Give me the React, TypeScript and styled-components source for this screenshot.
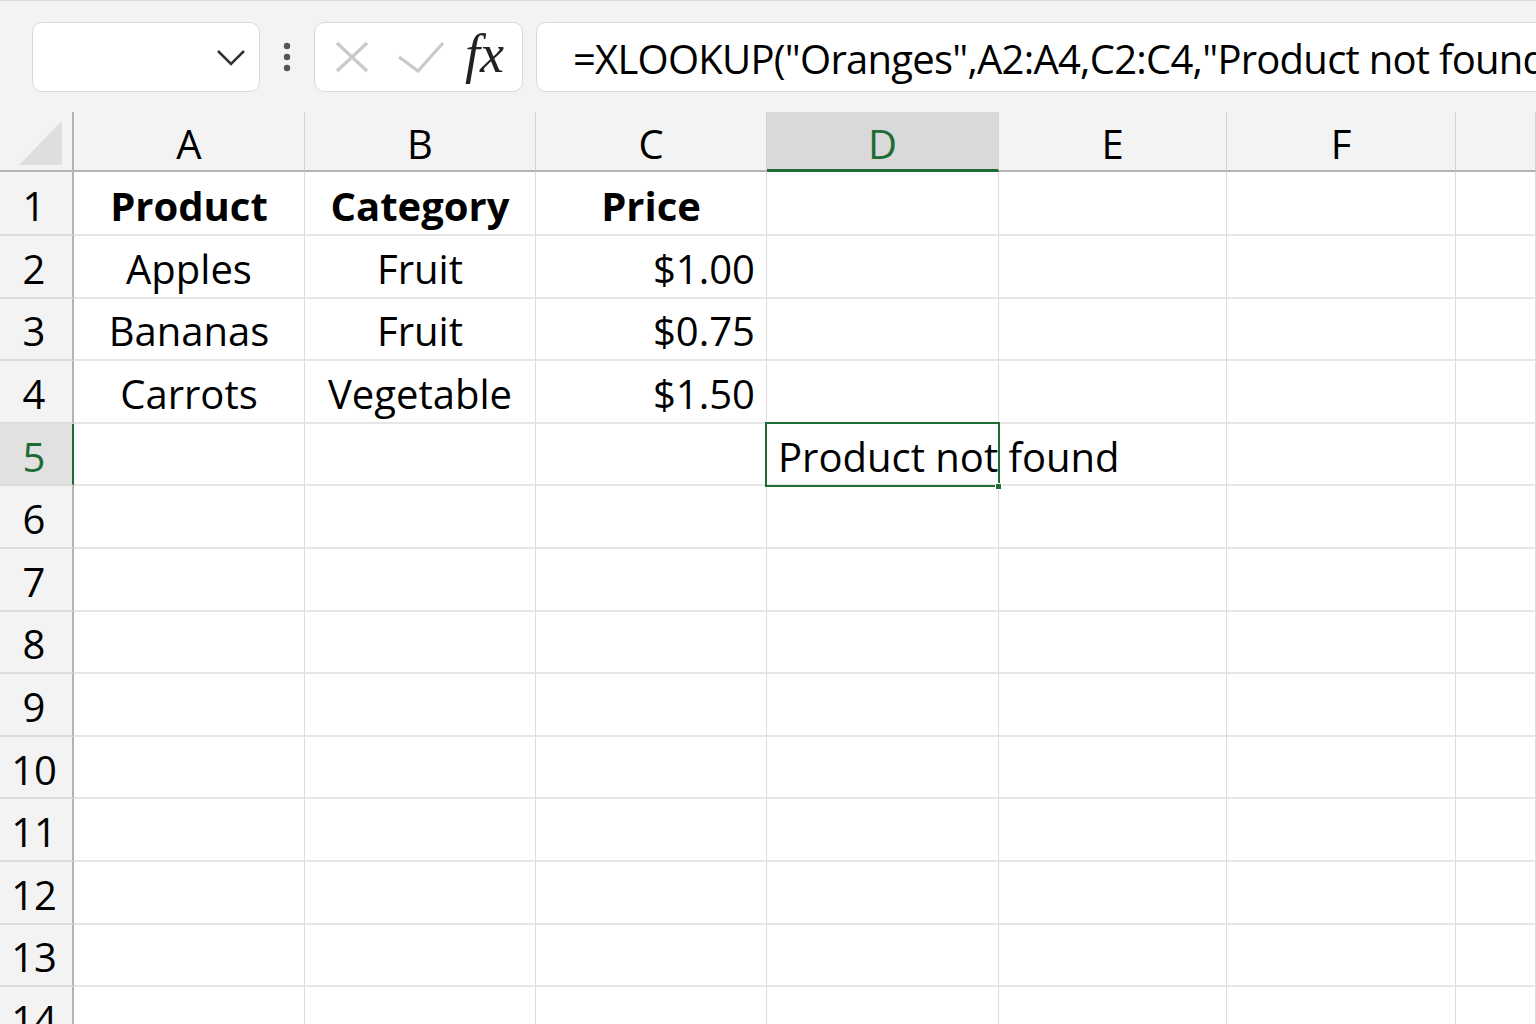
import React from "react";
import styled, { createGlobalStyle } from "styled-components";

const GREEN = "#1d6b35";

const GlobalStyle = createGlobalStyle`
  html, body { margin: 0; padding: 0; }
  body {
    background: #f3f3f3;
    overflow: hidden;
    font-family: "Open Sans", "Noto Sans", "Liberation Sans", sans-serif;
    color: #000;
  }
`;

const Page = styled.div`
  width: 1536px;
  height: 1024px;
  overflow: hidden;
  display: flex;
  flex-direction: column;
  background: #f3f3f3;
`;

const Toolbar = styled.div`
  height: 112px;
  box-sizing: border-box;
  border-top: 1px solid #dddddd;
  padding: 21px 0 0 32px;
  display: flex;
  align-items: flex-start;
  flex-shrink: 0;
`;

const Box = styled.div`
  height: 70px;
  box-sizing: border-box;
  background: #ffffff;
  border: 1.5px solid #d9d9d9;
  border-radius: 10px;
  display: flex;
  align-items: center;
`;

const NameBox = styled(Box)`
  width: 228px;
  justify-content: flex-end;
  padding-right: 13px;
`;

const DotsSlot = styled.div`
  width: 54px;
  height: 70px;
  display: flex;
  align-items: center;
  justify-content: center;
`;

const FxGroup = styled(Box)`
  width: 209px;
  padding-left: 20px;
`;

const ButtonIcon = styled.svg<{ $mr: number }>`
  display: block;
  margin-right: ${(p) => p.$mr}px;
  flex-shrink: 0;
`;

const FxLabel = styled.span`
  font-family: "Liberation Serif", "DejaVu Serif", serif;
  font-style: italic;
  font-size: 54px;
  line-height: 1;
  color: #222;
  margin-top: -6px;
`;

const FormulaBox = styled(Box)`
  flex: 1;
  margin-left: 13px;
  margin-right: -30px;
  padding-left: 36px;
  overflow: hidden;
  border-radius: 10px 0 0 10px;
`;

const FormulaText = styled.span`
  font-size: 40px;
  letter-spacing: -0.75px;
  white-space: nowrap;
  color: #000;
  padding-top: 3px;
`;

const Sheet = styled.div`
  flex: 1;
  display: grid;
  grid-template-columns: 74px 231px 231px 231px 232px 228px 229px 1fr;
  grid-template-rows: 60px 64px repeat(13, 62.6px);
  background: linear-gradient(#f3f3f3, #f3f3f3) top / 100% 60px no-repeat, #ffffff;
  overflow: hidden;
`;

const Corner = styled.div`
  background: #f3f3f3;
  border-bottom: 2px solid #b4b4b4;
  border-right: 2px solid #b4b4b4;
  box-sizing: border-box;
  display: flex;
  align-items: flex-end;
  justify-content: flex-end;
  padding: 0 10px 5px 0;
`;

const ColHead = styled.div<{ $active?: boolean }>`
  box-sizing: border-box;
  background: ${(p) => (p.$active ? "#d9d9d9" : "#f3f3f3")};
  border-right: 1px solid #d2d2d2;
  border-bottom: ${(p) => (p.$active ? `3px solid ${GREEN}` : "2px solid #b4b4b4")};
  color: ${(p) => (p.$active ? GREEN : "#000")};
  font-size: 40px;
  display: flex;
  align-items: center;
  justify-content: center;
  padding-top: ${(p) => (p.$active ? "6px" : "4px")};
`;

const RowHead = styled.div<{ $active?: boolean }>`
  box-sizing: border-box;
  background: ${(p) => (p.$active ? "#e1e1e1" : "#f3f3f3")};
  border-bottom: 2px solid #dcdcdc;
  border-right: 2px solid ${(p) => (p.$active ? GREEN : "#b4b4b4")};
  color: ${(p) => (p.$active ? GREEN : "#000")};
  font-size: 40px;
  display: flex;
  align-items: center;
  justify-content: center;
  padding: 4px 4px 0 0;
`;

const Cell = styled.div<{
  $align?: "left" | "center" | "right";
  $bold?: boolean;
  $selected?: boolean;
}>`
  box-sizing: border-box;
  position: ${(p) => (p.$selected ? "relative" : "static")};
  border-right: 1px solid #dcdcdc;
  border-bottom: 2px solid #e6e6e6;
  font-size: 40px;
  font-weight: ${(p) => (p.$bold ? 700 : 400)};
  white-space: nowrap;
  overflow: visible;
  display: flex;
  align-items: center;
  justify-content: ${(p) =>
    p.$align === "center" ? "center" : p.$align === "right" ? "flex-end" : "flex-start"};
  padding: 4px 11px 0 11px;
  min-width: 0;
  z-index: ${(p) => (p.$selected ? 2 : "auto")};

  ${(p) =>
    p.$selected &&
    `
    &::after {
      content: "";
      position: absolute;
      top: -2px;
      left: -2px;
      right: -2px;
      bottom: -3px;
      border: 2px solid ${GREEN};
      pointer-events: none;
    }
  `}
`;

const FillHandle = styled.span`
  position: absolute;
  right: -4px;
  bottom: -6px;
  width: 5px;
  height: 5px;
  background: ${GREEN};
  border: 1px solid #fff;
  z-index: 3;
`;

type CellData = { text: string; align?: "left" | "center" | "right"; bold?: boolean };

const data: Record<number, CellData[]> = {
  1: [
    { text: "Product", align: "center", bold: true },
    { text: "Category", align: "center", bold: true },
    { text: "Price", align: "center", bold: true },
  ],
  2: [
    { text: "Apples", align: "center" },
    { text: "Fruit", align: "center" },
    { text: "$1.00", align: "right" },
  ],
  3: [
    { text: "Bananas", align: "center" },
    { text: "Fruit", align: "center" },
    { text: "$0.75", align: "right" },
  ],
  4: [
    { text: "Carrots", align: "center" },
    { text: "Vegetable", align: "center" },
    { text: "$1.50", align: "right" },
  ],
};

const columns = ["A", "B", "C", "D", "E", "F", ""];
const rows = Array.from({ length: 14 }, (_, i) => i + 1);

export default function App() {
  return (
    <Page>
      <GlobalStyle />
      <Toolbar>
        <NameBox>
          <svg width="30" height="18" viewBox="0 0 30 18">
            <polyline points="2,3 15,16 28,3" fill="none" stroke="#333" strokeWidth="2.6" />
          </svg>
        </NameBox>
        <DotsSlot>
          <svg width="10" height="30" viewBox="0 0 10 30">
            <circle cx="5" cy="4" r="3.2" fill="#555" />
            <circle cx="5" cy="15" r="3.2" fill="#555" />
            <circle cx="5" cy="26" r="3.2" fill="#555" />
          </svg>
        </DotsSlot>
        <FxGroup>
          <ButtonIcon $mr={28} width="34" height="32" viewBox="0 0 34 32">
            <line x1="2" y1="2" x2="32" y2="30" stroke="#c9c9c9" strokeWidth="3.2" />
            <line x1="32" y1="2" x2="2" y2="30" stroke="#c9c9c9" strokeWidth="3.2" />
          </ButtonIcon>
          <ButtonIcon $mr={20} width="48" height="32" viewBox="0 0 48 32">
            <polyline points="2,16 21,30 46,2" fill="none" stroke="#c9c9c9" strokeWidth="3.2" />
          </ButtonIcon>
          <FxLabel>fx</FxLabel>
        </FxGroup>
        <FormulaBox>
          <FormulaText>=XLOOKUP("Oranges",A2:A4,C2:C4,"Product not found")</FormulaText>
        </FormulaBox>
      </Toolbar>
      <Sheet>
        <Corner>
          <svg width="43" height="44" viewBox="0 0 43 44">
            <polygon points="0,44 43,44 43,0" fill="#dedede" />
          </svg>
        </Corner>
        {columns.map((c, i) => (
          <ColHead key={`h${i}`} $active={c === "D"}>
            {c}
          </ColHead>
        ))}
        {rows.map((r) => (
          <React.Fragment key={r}>
            <RowHead $active={r === 5}>{r}</RowHead>
            {columns.map((c, ci) => {
              const d = data[r]?.[ci];
              const selected = r === 5 && c === "D";
              if (selected) {
                return (
                  <Cell key={c + r} $selected>
                    Product not found
                    <FillHandle />
                  </Cell>
                );
              }
              return (
                <Cell key={`${ci}-${r}`} $align={d?.align} $bold={d?.bold}>
                  {d?.text ?? ""}
                </Cell>
              );
            })}
          </React.Fragment>
        ))}
      </Sheet>
    </Page>
  );
}
